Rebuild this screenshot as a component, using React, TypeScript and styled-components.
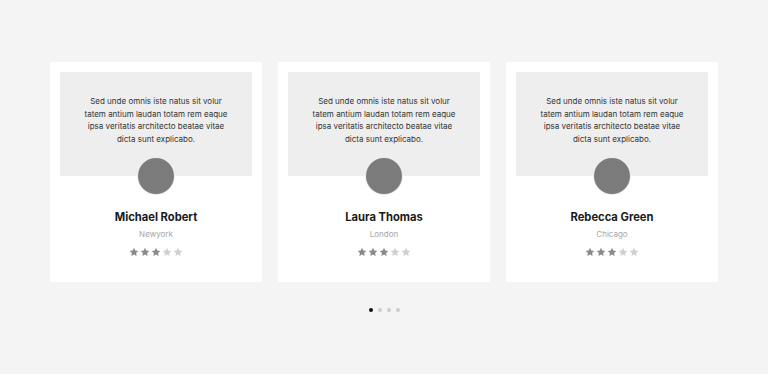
import styled, { createGlobalStyle } from "styled-components";

const GlobalStyle = createGlobalStyle`
  body {
    margin: 0;
    background-color: #f4f4f4;
    font-family: Inter, "Open Sans", sans-serif;
  }
`;

const Page = styled.div`
  display: flex;
  flex-direction: column;
  align-items: center;
  padding-top: 62px;
`;

const CardRow = styled.div`
  display: flex;
  gap: 16px;
`;

const Card = styled.div`
  width: 212px;
  height: 220px;
  box-sizing: border-box;
  padding: 10px;
  background-color: #ffffff;
  display: flex;
  flex-direction: column;
  align-items: center;
`;

const Quote = styled.div`
  width: 100%;
  height: 104px;
  box-sizing: border-box;
  padding: 23px 20px 0;
  background-color: #eeeeee;
  font-size: 8px;
  line-height: 12.6px;
  color: #333333;
  text-align: center;
`;

const Avatar = styled.div`
  width: 36px;
  height: 36px;
  margin-top: -18px;
  border-radius: 50%;
  background-color: #7b7b7b;
  box-shadow: 0 0 0 1px #ececec;
`;

const Name = styled.div`
  margin-top: 15px;
  font-size: 11.2px;
  line-height: 16px;
  font-weight: 700;
  color: #1a1a1a;
`;

const City = styled.div`
  margin-top: 3px;
  font-size: 8px;
  line-height: 12px;
  color: #a6a6a6;
`;

const Stars = styled.div`
  margin-top: 7px;
  display: flex;
  gap: 1px;
`;

const Dots = styled.div`
  display: flex;
  gap: 5px;
  margin-top: 26px;
`;

const Dot = styled.span<{ $active?: boolean }>`
  width: 4px;
  height: 4px;
  border-radius: 50%;
  background-color: ${(p) => (p.$active ? "#111111" : "#cccccc")};
`;

const Star = ({ on }: { on: boolean }) => (
  <svg width="10" height="10" viewBox="0 0 24 24">
    <path
      d="M12 1.8l3.1 6.6 7.2.9-5.3 5 1.4 7.1L12 18l-6.4 3.4 1.4-7.1-5.3-5 7.2-.9z"
      fill={on ? "#8a8a8a" : "#d0d0d0"}
    />
  </svg>
);

const people = [
  { name: "Michael Robert", city: "Newyork" },
  { name: "Laura Thomas", city: "London" },
  { name: "Rebecca Green", city: "Chicago" },
];

const quote =
  "Sed unde omnis iste natus sit volur tatem antium laudan totam rem eaque ipsa veritatis architecto beatae vitae dicta sunt explicabo.";

const App = () => {
  return (
    <>
      <GlobalStyle />
      <Page>
        <CardRow>
          {people.map((p) => (
            <Card key={p.name}>
              <Quote>{quote}</Quote>
              <Avatar />
              <Name>{p.name}</Name>
              <City>{p.city}</City>
              <Stars>
                {[0, 1, 2, 3, 4].map((i) => (
                  <Star key={i} on={i < 3} />
                ))}
              </Stars>
            </Card>
          ))}
        </CardRow>
        <Dots>
          <Dot $active />
          <Dot />
          <Dot />
          <Dot />
        </Dots>
      </Page>
    </>
  );
};

export default App;
